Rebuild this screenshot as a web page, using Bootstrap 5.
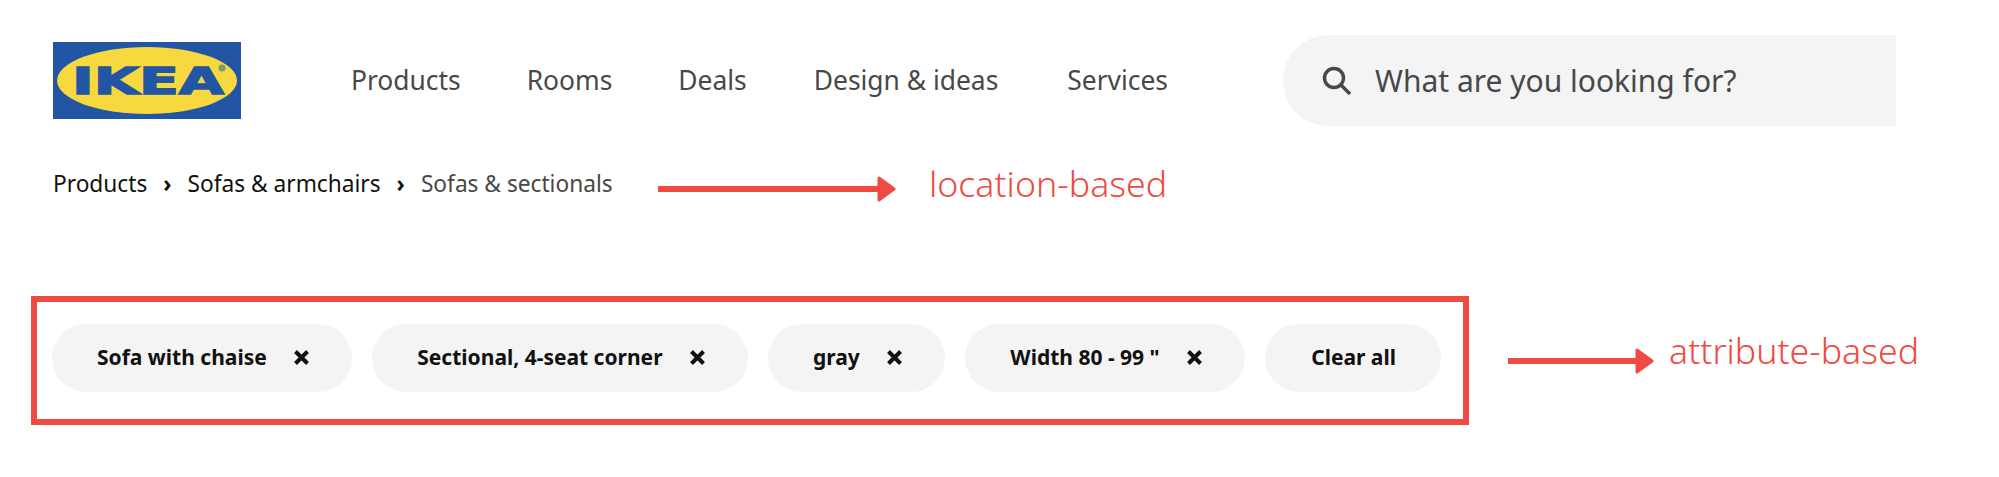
<!DOCTYPE html>
<html lang="en">
<head>
    <meta charset="UTF-8">
    <meta name="viewport" content="width=device-width, initial-scale=1.0">
    <title>IKEA filters</title>
    <link rel="stylesheet" href="https://cdn.jsdelivr.net/npm/bootstrap@5.3.0/dist/css/bootstrap.min.css">
    <style>
        body { font-family: "Noto Sans", sans-serif; background: #fff; overflow: hidden; }
        .page-wrap { width: 1999px; height: 477px; padding: 35px 0 0 31px; }
        .top-bar { height: 91px; padding-left: 22px; }
        .ikea-logo { width: 188px; height: 77px; display: block; flex: none; }
        .main-links { margin-left: 110px; gap: 66px; width: 822px; flex: none; }
        .main-links a { font-size: 26.4px; color: #484848; text-decoration: none; }
        .main-links a:nth-child(4) { margin-left: 1px; }
        .main-links a:last-child { margin-left: 3px; }
        .search-box { width: 613px; height: 91px; margin-left: 110px; padding-left: 39px; gap: 23px; background: #f4f4f4; border-radius: 46px 0 0 46px; color: #484848; font-size: 30px; flex: none; }
        .crumb-row { margin-top: 36px; padding-left: 22px; height: 44px; }
        .crumb-row .breadcrumb { --bs-breadcrumb-divider: "›"; --bs-breadcrumb-margin-bottom: 0; --bs-breadcrumb-item-padding-x: 16px; font-size: 22.7px; width: 605px; }
        .crumb-row a { color: #111; text-decoration: none; }
        .crumb-row .breadcrumb-item::before { color: #111; font-weight: 700; }
        .crumb-row .breadcrumb-item.active { color: #484848; }
        .note-label { color: #ee4b43; font-size: 35.7px; line-height: 1; white-space: nowrap; font-weight: 300; }
        .note-label-up { margin-bottom: 20px; }
        .arrow-one { width: 238px; height: 30px; margin: 10px 33px 0 0; flex: none; }
        .filter-row { margin-top: 90px; }
        .filter-box { width: 1438px; height: 129px; border: 6px solid #ee4b43; padding: 0 0 6px 15px; gap: 20.5px; flex: none; }
        .chip-btn { height: 68px; padding: 0 43px 0 45px; gap: 27px; background: #f4f4f4; color: #111; font-size: 21px; font-weight: 700; border: 0; border-radius: 34px; white-space: nowrap; flex: none; }
        .chip-btn:last-child { padding: 0 45px 0 46px; }
        .chip-x { width: 15px; height: 15px; stroke: #111; stroke-width: 4; flex: none; }
        .arrow-two { width: 146px; height: 30px; margin: 0 15px 0 39px; flex: none; }
    </style>
</head>
<body>
    <div class="page-wrap">
        <header class="top-bar d-flex align-items-center">
            <svg class="ikea-logo" viewBox="0 0 188 77">
                <rect width="188" height="77" fill="#2255a4"/>
                <ellipse cx="94" cy="38.5" rx="90" ry="33.5" fill="#f8d83f"/>
                <text x="19" y="51.5" textLength="152" lengthAdjust="spacingAndGlyphs" font-family="DejaVu Sans" font-weight="700" font-size="38" fill="#2255a4" stroke="#2255a4" stroke-width="1.5">IKEA</text>
                <circle cx="169" cy="26" r="3.5" fill="#7f9a6c"/>
            </svg>
            <nav class="main-links d-flex align-items-center">
                <a href="#">Products</a>
                <a href="#">Rooms</a>
                <a href="#">Deals</a>
                <a href="#">Design &amp; ideas</a>
                <a href="#">Services</a>
            </nav>
            <div class="search-box d-flex align-items-center">
                <svg width="30" height="30" viewBox="0 0 30 30" fill="none" stroke="#484848" stroke-width="3.4">
                    <circle cx="12" cy="12" r="9.5"/>
                    <path d="M19 19l9 9"/>
                </svg>
                <span>What are you looking for?</span>
            </div>
        </header>

        <div class="crumb-row d-flex align-items-center">
            <nav aria-label="breadcrumb">
                <ol class="breadcrumb">
                    <li class="breadcrumb-item"><a href="#">Products</a></li>
                    <li class="breadcrumb-item"><a href="#">Sofas &amp; armchairs</a></li>
                    <li class="breadcrumb-item active" aria-current="page">Sofas &amp; sectionals</li>
                </ol>
            </nav>
            <svg class="arrow-one" viewBox="0 0 238 30">
                <path d="M0 15H222" stroke="#ee4b43" stroke-width="6"/>
                <path d="M221 4l15 11-15 11z" fill="#ee4b43" stroke="#ee4b43" stroke-width="3" stroke-linejoin="round"/>
            </svg>
            <span class="note-label">location-based</span>
        </div>

        <div class="filter-row d-flex align-items-center">
            <div class="filter-box d-flex align-items-center">
                <button type="button" class="chip-btn d-flex align-items-center">Sofa with chaise <svg class="chip-x" viewBox="0 0 15 15"><path d="M1.5 1.5l12 12M13.5 1.5l-12 12"/></svg></button>
                <button type="button" class="chip-btn d-flex align-items-center">Sectional, 4-seat corner <svg class="chip-x" viewBox="0 0 15 15"><path d="M1.5 1.5l12 12M13.5 1.5l-12 12"/></svg></button>
                <button type="button" class="chip-btn d-flex align-items-center">gray <svg class="chip-x" viewBox="0 0 15 15"><path d="M1.5 1.5l12 12M13.5 1.5l-12 12"/></svg></button>
                <button type="button" class="chip-btn d-flex align-items-center">Width 80 - 99 " <svg class="chip-x" viewBox="0 0 15 15"><path d="M1.5 1.5l12 12M13.5 1.5l-12 12"/></svg></button>
                <button type="button" class="chip-btn d-flex align-items-center">Clear all</button>
            </div>
            <svg class="arrow-two" viewBox="0 0 146 30">
                <path d="M0 15H130" stroke="#ee4b43" stroke-width="6"/>
                <path d="M129 4l15 11-15 11z" fill="#ee4b43" stroke="#ee4b43" stroke-width="3" stroke-linejoin="round"/>
            </svg>
            <span class="note-label note-label-up">attribute-based</span>
        </div>
    </div>

    <script src="https://cdn.jsdelivr.net/npm/bootstrap@5.3.0/dist/js/bootstrap.bundle.min.js"></script>
</body>
</html>
